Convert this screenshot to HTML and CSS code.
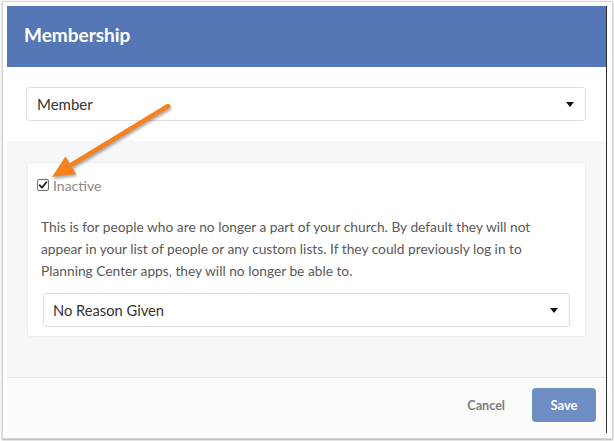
FILE: index.html
```html
<!DOCTYPE html>
<html>
<head>
<meta charset="utf-8">
<link rel="stylesheet" href="styles.css">
</head>
<body>
<div class="window">
  <div class="modal">
    <div class="modal-header"><h1 class="title">Membership</h1></div>
    <div class="modal-top">
      <div class="select"><span>Member</span><span class="caret"></span></div>
    </div>
    <div class="modal-section">
      <div class="card">
        <label class="check-row">
          <span class="checkbox"><svg width="10" height="10" viewBox="0 0 10 10"><path d="M1.6 5.2 L4 7.6 L8.4 2.2" fill="none" stroke="#222" stroke-width="1.8" stroke-linecap="round" stroke-linejoin="round"/></svg></span>
          <span class="check-label">Inactive</span>
        </label>
        <p class="desc">This is for people who are no longer a part of your church. By default they will not appear in your list of people or any custom lists. If they could previously log in to Planning Center apps, they will no longer be able to.</p>
        <div class="select select-inner"><span>No Reason Given</span><span class="caret"></span></div>
      </div>
    </div>
    <div class="modal-footer">
      <button class="btn-cancel">Cancel</button>
      <button class="btn-save">Save</button>
    </div>
  </div>
</div>
<svg class="arrow" width="614" height="441" viewBox="0 0 614 441">
  <g class="arrow-shape">
    <line x1="168" y1="106" x2="72" y2="164.5" stroke="#f5821f" stroke-width="4.5" stroke-linecap="round"/>
    <polygon points="52,177 76,174 65.5,156.5" fill="#f5821f"/>
  </g>
</svg>
</body>
</html>
```
FILE: styles.css
```css
* { box-sizing: border-box; }
body {
  margin: 0;
  background: #ffffff;
  font-family: Lato, "Open Sans", "Liberation Sans", sans-serif;
  position: relative;
  width: 614px;
  height: 441px;
  overflow: hidden;
}
.window {
  margin: 1px 0 0 2px;
  width: 611px;
  height: 438px;
  border: 1px solid #d6d6d6;
  box-shadow: 0 1px 2px rgba(0,0,0,0.35);
  padding: 4px 0 0 4px;
  background: #fff;
}
.modal {
  width: 600px;
  height: 427px;
  border-right: 1px solid #2f3035;
  display: flex;
  flex-direction: column;
  background: #fff;
}
.modal-header {
  height: 61px;
  background: #5677b6;
  padding-left: 17px;
  display: flex;
  align-items: center;
}
.title {
  margin: 0;
  color: #fff;
  font-size: 19px;
  font-weight: 700;
  padding-bottom: 5px;
}
.modal-top {
  padding: 20px 20px 20px 19px;
}
.select {
  height: 34px;
  border: 1px solid #dedfe2;
  border-radius: 3px;
  display: flex;
  align-items: center;
  justify-content: space-between;
  padding: 0 10px 0 10px;
  font-size: 15px;
  color: #333;
  background: #fff;
}
.caret {
  width: 0;
  height: 0;
  border-left: 4px solid transparent;
  border-right: 4px solid transparent;
  border-top: 5px solid #111;
  margin-right: 1px;
}
.modal-section {
  flex: 1;
  background: #f6f7f9;
  padding: 21px 20px 0 20px;
}
.card {
  background: #fff;
  border: 1px solid #eceef1;
  border-radius: 3px;
  padding: 11px 15px 9px 15px;
  height: 175px;
}
.check-row {
  display: flex;
  align-items: center;
  height: 22px;
  margin-left: -6px;
}
.checkbox {
  width: 12px;
  height: 12px;
  border: 1px solid #6e6e6e;
  border-radius: 2px;
  display: flex;
  align-items: center;
  justify-content: center;
  background: #fff;
}
.check-label {
  margin-left: 4px;
  font-size: 14px;
  color: #8a8a8a;
}
.desc {
  margin: 20px 0 0 -2px;
  font-size: 13.75px;
  line-height: 22px;
  color: #595959;
}
.select-inner {
  margin-top: 11px;
  font-size: 14.7px;
  padding-left: 9px;
}
.modal-footer {
  height: 56px;
  border-top: 1px solid #e3e4e6;
  background: #fafafa;
  display: flex;
  align-items: center;
  justify-content: flex-end;
  padding: 0 10px 1px 0;
  gap: 23px;
}
.btn-cancel {
  border: none;
  background: transparent;
  font-family: inherit;
  font-size: 12.6px;
  font-weight: 700;
  color: #7f7f7f;
  padding: 0 4px;
}
.btn-save {
  width: 64px;
  height: 34px;
  border: none;
  border-radius: 4px;
  background: #6e8dc3;
  color: #fff;
  font-family: inherit;
  font-size: 13px;
  font-weight: 700;
}
.arrow {
  position: absolute;
  top: 0;
  left: 0;
  pointer-events: none;
}
.arrow-shape {
  filter: drop-shadow(1px 2px 1.5px rgba(0,0,0,0.35));
}
```
